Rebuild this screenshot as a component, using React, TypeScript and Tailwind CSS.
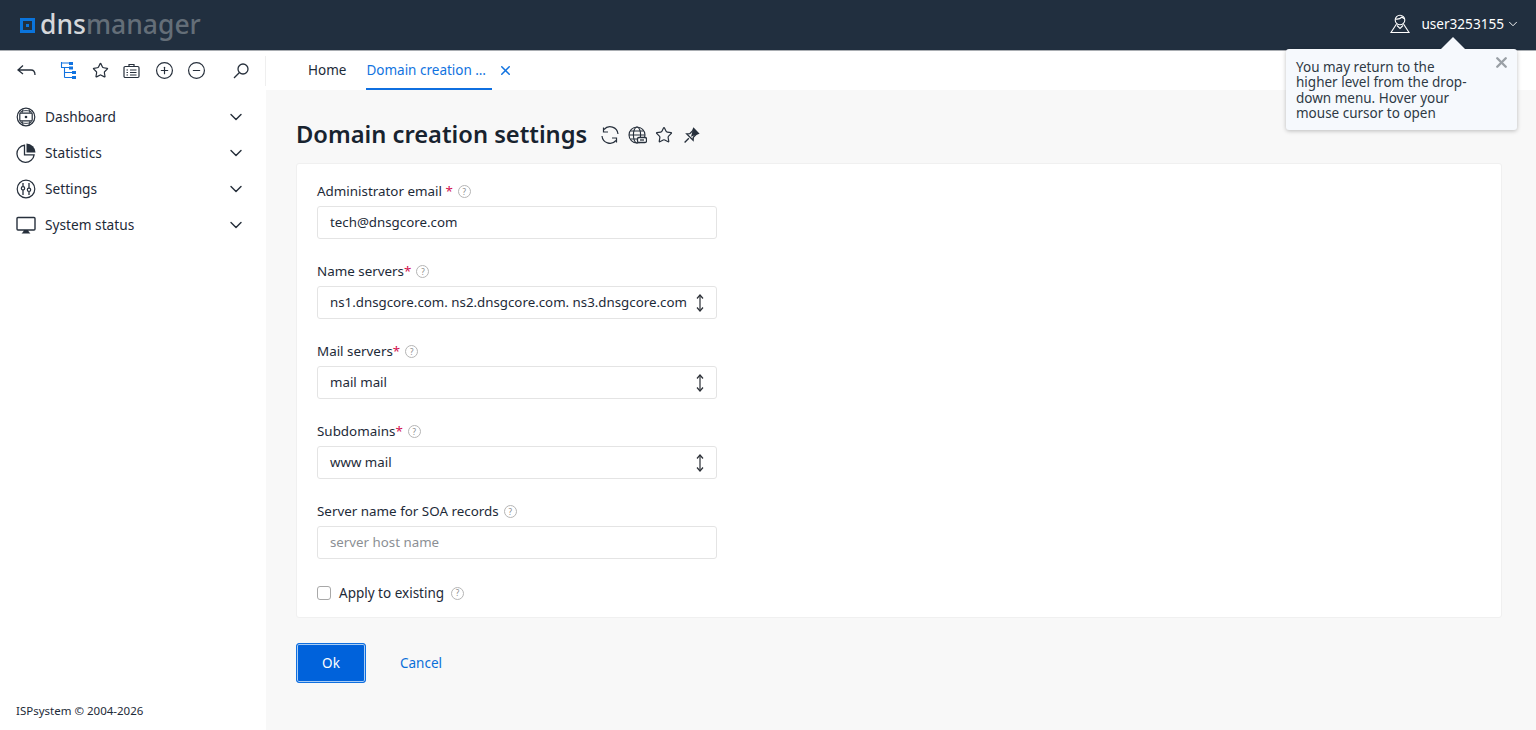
import type React from "react"
import { ChevronDown, CirclePlus, CircleMinus, Star, X } from "lucide-react"

const FONT = "font-['Noto_Sans','Open_Sans',sans-serif]"

function HelpMark({ className }: { className: string }) {
  return (
    <span className={`flex h-[13px] w-[13px] items-center justify-center rounded-full border border-[#b5b5b5] text-[8px] leading-none text-[#8a8a8a] ${className}`}>
      ?
    </span>
  )
}

function UpDown() {
  return (
    <svg width="12" height="20" viewBox="0 0 12 20" fill="none" stroke="#2b2f36" strokeWidth="1.2" className="shrink-0">
      <path d="M6 2v16" />
      <path d="M3 5.5 6 2l3 3.5" />
      <path d="M3 14.5 6 18l3-3.5" />
    </svg>
  )
}

function Field({ label, star, value, placeholder, select }: { label: string; star?: string; value?: string; placeholder?: string; select?: boolean }) {
  return (
    <div className="mb-[15px] h-[65px]">
      <div className="flex h-[26px] items-center pb-[3px] text-[13.4px] text-[#1d2a38]">
        <span>{label}</span>
        {star && <span className="whitespace-pre text-[#d3124f]">{star}</span>}
        <HelpMark className="ml-[5px]" />
      </div>
      <div className="flex h-[33px] w-[400px] items-center rounded-[3px] border border-[#e4e4e4] bg-white pl-[12px] pr-[10px] text-[13.3px]">
        <span className={`min-w-0 flex-1 whitespace-nowrap pt-[1px] ${placeholder ? "text-[#8b8f94]" : "text-[#1d2a38]"}`}>
          {value || placeholder}
        </span>
        {select && <span className="ml-[9px]"><UpDown /></span>}
      </div>
    </div>
  )
}

function DashIcon() {
  return (
    <svg width="20" height="20" viewBox="0 0 20 20" fill="none" stroke="#27303c" strokeWidth="1.2">
      <circle cx="10" cy="10" r="8.8" />
      <path d="M4 5.5C6 3 14 3 16 5.5M4 14.5C6 17 14 17 16 14.5M7 2 6 6M13 2l1 4M7 18l-1-4M13 18l1-4" strokeWidth="0.9" />
      <rect x="3.8" y="6.2" width="12.4" height="7.6" rx="0.8" fill="#fff" />
      <circle cx="10" cy="10" r="1.3" fill="#27303c" stroke="none" />
    </svg>
  )
}

function StatIcon() {
  return (
    <svg width="20" height="20" viewBox="0 0 20 20" fill="none" stroke="#27303c" strokeWidth="1.3">
      <path d="M8.5 2.2a8.6 8.6 0 1 0 9.6 9.6H8.5z" />
      <path d="M10.5 0.5a9 9 0 0 1 9 9h-9z" fill="#27303c" stroke="none" />
    </svg>
  )
}

function TuneIcon() {
  return (
    <svg width="20" height="20" viewBox="0 0 20 20" fill="none" stroke="#27303c" strokeWidth="1.2">
      <circle cx="10" cy="10" r="8.8" />
      <path d="M7 4v3.5M7 11v5M13 4v5M13 12.500v3.500" strokeWidth="1.3" />
      <circle cx="7" cy="9.3" r="1.7" />
      <circle cx="13" cy="10.8" r="1.7" />
    </svg>
  )
}

function MonitorIcon() {
  return (
    <svg width="20" height="20" viewBox="0 0 20 20" fill="none" stroke="#27303c" strokeWidth="1.4">
      <rect x="1" y="2.5" width="18" height="12.5" rx="1" />
      <path d="M5.5 18.5h9l-1.500-1.500-1-2H8l-1 2z" fill="#27303c" stroke="none" />
    </svg>
  )
}

function NavRow({ icon, label }: { icon: React.ReactNode; label: string }) {
  return (
    <div className="flex h-[36px] items-center pl-[16px] pr-[20px] text-[13.7px] text-[#1d2a38]">
      <span className="flex w-[29px] shrink-0">{icon}</span>
      <span className="flex-1">{label}</span>
      <ChevronDown size={20} strokeWidth={1.7} color="#27303c" />
    </div>
  )
}

export default function App() {
  return (
    <div className={`relative flex h-screen flex-col overflow-hidden bg-white ${FONT}`}>
      <header className="flex h-[51px] shrink-0 items-center justify-between border-b border-[#a9adb2] bg-[#212f3f] pl-[20px] pr-[16px]">
        <div className="flex items-center">
          <span className="flex h-[15px] w-[15px] items-center justify-center border-[3px] border-[#0a74dc]">
            <span className="h-[3px] w-[3px] bg-[#0a74dc]" />
          </span>
          <span className="ml-[5px] pb-[2px] text-[26.5px] font-medium leading-none text-[#d5d7da]">
            dns<span className="text-[#646e78]">manager</span>
          </span>
        </div>
        <div className="flex items-center pb-[1px] text-[13.6px] text-white">
          <svg width="20" height="20" viewBox="0 0 20 20" fill="none" stroke="#fff" strokeWidth="1.1" className="mr-[11px]">
            <circle cx="10" cy="6" r="4.8" />
            <path d="M5.5 5C8 5.500 11 4 12 3c1 1 2 1.500 2.500 2" />
            <path d="M6.5 10 1 18.500h18L13.500 10M7 11.500l3 3 3-3" />
          </svg>
          <span>user3253155</span>
          <ChevronDown size={14} strokeWidth={1.6} className="ml-[2px]" />
        </div>
      </header>

      <div className="flex h-[39px] shrink-0 items-center bg-white">
        <div className="flex h-[30px] w-[266px] shrink-0 items-center border-r border-[#efefef] pl-[17px]">
          <svg width="19" height="14" viewBox="0 0 19 14" fill="none" stroke="#27303c" strokeWidth="1.3">
            <path d="M6 1.500 1 6l5 4M1 6h13c2.500 0 4 1.500 4 5" />
          </svg>
          <svg width="17" height="18" viewBox="0 0 17 18" fill="none" stroke="#1173e0" strokeWidth="1.1" className="ml-[24px]">
            <path d="M1.500 0v5.500M1 1h8M1 5.500h8M4.500 5.500V15.500M4.500 10.500H12M4.500 15.500H12" />
            <rect x="9" y="0" width="4" height="3" fill="#1173e0" stroke="none" />
            <rect x="9" y="4.500" width="4" height="3" fill="#1173e0" stroke="none" />
            <rect x="12" y="9" width="4" height="3" fill="#1173e0" stroke="none" />
            <rect x="12" y="14" width="4" height="3" fill="#1173e0" stroke="none" />
          </svg>
          <Star size={17} strokeWidth={1.7} color="#27303c" className="ml-[15px]" />
          <svg width="17" height="16" viewBox="0 0 17 16" fill="none" stroke="#27303c" strokeWidth="1.2" className="ml-[14px]">
            <rect x="1" y="3.500" width="15" height="11" rx="1.2" />
            <path d="M6 3.500V1.500h5v2" />
            <path d="M3.500 7h1.500M3.500 9.500h1.500M3.500 12h1.500M7 7h6.500M7 9.500h6.500M7 12h6.500" />
          </svg>
          <CirclePlus size={19} strokeWidth={1.5} color="#27303c" className="ml-[15px]" />
          <CircleMinus size={19} strokeWidth={1.5} color="#27303c" className="ml-[13px]" />
          <svg width="16" height="16" viewBox="0 0 16 16" fill="none" stroke="#27303c" strokeWidth="1.3" className="ml-[27px]">
            <circle cx="10" cy="6" r="5" />
            <path d="M6.200 9.800 1 15" />
          </svg>
        </div>
        <nav className="ml-[30px] flex h-full items-stretch text-[13.5px]">
          <span className="mr-[8px] flex items-center px-[12px] text-[#1d2a38]">Home</span>
          <span className="flex w-[126px] items-center border-b-2 border-[#0f6fe0] pt-[2px] text-[#1173e0]">
            Domain creation …
          </span>
          <X size={15} strokeWidth={2.4} color="#1173e0" className="ml-[6px] self-center" />
        </nav>
      </div>

      <div className="flex min-h-0 flex-1">
        <aside className="flex w-[266px] shrink-0 flex-col justify-between bg-white pb-[10px] pt-[9px]">
          <div>
            <NavRow icon={<DashIcon />} label="Dashboard" />
            <NavRow icon={<StatIcon />} label="Statistics" />
            <NavRow icon={<TuneIcon />} label="Settings" />
            <NavRow icon={<MonitorIcon />} label="System status" />
          </div>
          <p className="pb-[1px] pl-[16px] text-[11.5px] text-[#1d2a38]">ISPsystem © 2004-2026</p>
        </aside>

        <main className="flex-1 bg-[#f8f8f8] pl-[30px] pr-[34px]">
          <div className="flex h-[73px] items-center pt-[17px]">
            <h1 className="text-[23.7px] font-semibold leading-none text-[#18232f]">Domain creation settings</h1>
            <div className="ml-[13px] flex items-center">
              <svg width="20" height="20" viewBox="0 0 20 20" fill="none" stroke="#27303c" strokeWidth="1.2">
                <path d="M18 9A8 8 0 0 0 4 4.500M2 11a8 8 0 0 0 14 4.500" />
                <path d="M3.500 2.500V7H8M16.500 17.500V13H12" />
              </svg>
              <svg width="19" height="19" viewBox="0 0 19 19" fill="none" stroke="#27303c" strokeWidth="1.1" className="ml-[8px]">
                <circle cx="9" cy="9" r="8" />
                <ellipse cx="9" cy="9" rx="3.600" ry="8" />
                <path d="M1 9h16M2.500 5h13M2.500 13h13" />
                <rect x="9.500" y="11.500" width="9" height="5" rx="1.500" fill="#fff" strokeWidth="1.3" />
                <path d="M12 14h4" strokeWidth="1.3" />
              </svg>
              <Star size={18} strokeWidth={1.6} color="#27303c" className="ml-[8px]" />
              <svg width="17" height="17" viewBox="0 0 16 16" fill="none" stroke="#27303c" strokeWidth="1.3" className="ml-[10px]">
                <path d="M10 1.500 14.500 6 12.500 6.800 9.700 9.600 9.500 12.500 3.500 6.500 6.400 6.300 9.200 3.500z" />
                <path d="M5.500 10.500 1.500 14.500" />
                <path d="M10 2.500 13.500 6 8.500 8z" fill="#27303c" />
              </svg>
            </div>
          </div>

          <section className="h-[455px] rounded-[3px] border border-[#f0f0f0] bg-white pl-[20px] pt-[16px]">
            <Field label="Administrator email" star=" *" value="tech@dnsgcore.com" />
            <Field label="Name servers" star="*" value="ns1.dnsgcore.com. ns2.dnsgcore.com. ns3.dnsgcore.com" select />
            <Field label="Mail servers" star="*" value="mail mail" select />
            <Field label="Subdomains" star="*" value="www mail" select />
            <Field label="Server name for SOA records" placeholder="server host name" />
            <label className="mt-[18px] flex h-[20px] items-center text-[13.5px] text-[#1d2a38]">
              <span className="mr-[8px] h-[14px] w-[14px] rounded-[3px] border border-[#a8a8a8] bg-white" />
              <span>Apply to existing</span>
              <HelpMark className="ml-[7px]" />
            </label>
          </section>

          <div className="mt-[25px] flex items-center">
            <button className="h-[40px] w-[70px] rounded-[3px] border border-[#0f6fe0] bg-[#0062db] text-[13.5px] text-white shadow-[inset_0_0_0_1px_#a9cdf5]">
              Ok
            </button>
            <a className="ml-[34px] text-[13.5px] text-[#0a6fd8]">Cancel</a>
          </div>
        </main>
      </div>

      <div className="absolute left-[1286px] top-[49px] w-[231px] rounded-[3px] bg-[#f6f9fd] pb-[8px] pl-[10px] pr-[40px] pt-[11px] text-[13.5px] leading-[15.4px] text-[#2e3945] shadow-[0_1px_4px_rgba(0,0,0,0.25)]">
        <span className="absolute -top-[12px] left-[154px] h-0 w-0 border-x-[13px] border-b-[13px] border-x-transparent border-b-[#f6f9fd]" />
        <X size={17} strokeWidth={3.4} color="#9aa0a6" className="absolute right-[7px] top-[5px]" />
        You may return to the higher level from the drop-down menu. Hover your mouse cursor to open
      </div>
    </div>
  )
}
